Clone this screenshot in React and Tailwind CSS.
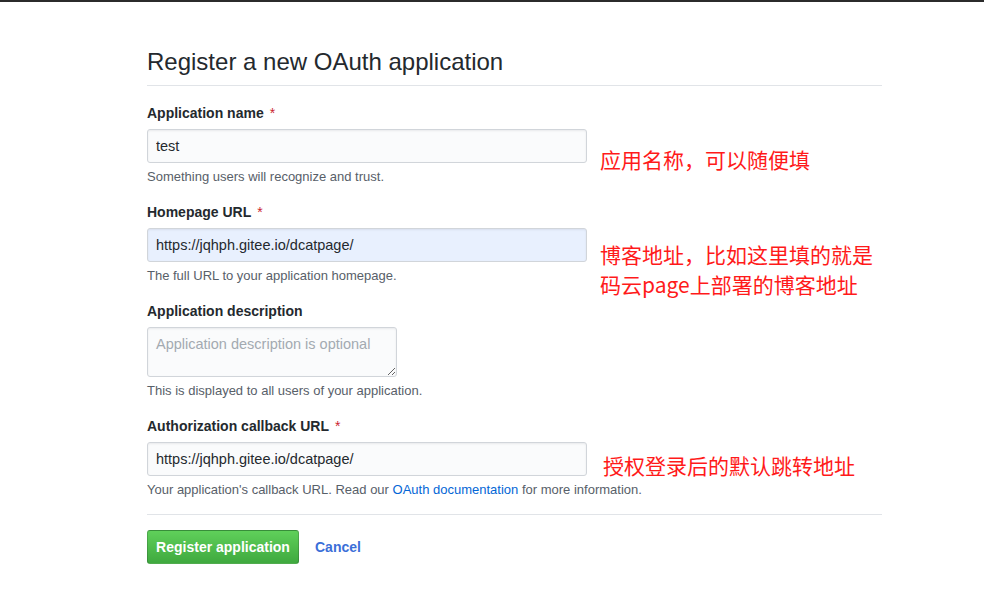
const labelCls = 'block text-[14px] leading-[20px] font-semibold text-[#24292e]'
const inputCls =
  'block w-[440px] h-[34px] px-2 text-[14.5px] text-[#24292e] border border-[#d1d5da] rounded-[3px] shadow-[inset_0_1px_2px_rgba(27,31,35,0.075)] outline-none'
const helpCls = 'mt-[5px] text-[13px] leading-[18px] text-[#586069] whitespace-nowrap'
const noteCls =
  "text-[21px] leading-[30px] text-[#ff1a1a] whitespace-nowrap font-['Noto_Sans_CJK_SC',sans-serif]"

const Star = () => <span className="ml-1.5 font-normal text-[#cb2431]">*</span>

const Field = ({ label, required, children, help, note, noteClass }) => (
  <div className="flex">
    <div className="w-[440px]">
      <label className={labelCls}>
        {label}
        {required && <Star />}
      </label>
      <div className="mt-1.5">{children}</div>
      <p className={helpCls}>{help}</p>
    </div>
    {note && <div className={`h-0 ${noteClass}`}>{note}</div>}
  </div>
)

export default function App() {
  return (
    <div className="min-h-[602px] w-[984px] bg-white font-['Liberation_Sans',Arial,sans-serif]">
      <div className="h-[2px] bg-[#2b2b2b]" />
      <div className="ml-[147px] w-[735px] pt-[45px]">
        <h1 className="pb-2 text-[24px] leading-[30px] font-light text-[#24292e] border-b border-[#e1e4e8]">
          Register a new OAuth application
        </h1>

        <div className="mt-[17px] flex flex-col gap-4">
          <Field
            label="Application name"
            required
            help="Something users will recognize and trust."
            note={<p className={noteCls}>应用名称，可以随便填</p>}
            noteClass="ml-[13px] mt-[41px]"
          >
            <input readOnly value="test" className={`${inputCls} bg-[#fafbfc]`} />
          </Field>

          <Field
            label="Homepage URL"
            required
            help="The full URL to your application homepage."
            note={
              <>
                <p className={noteCls}>博客地址，比如这里填的就是</p>
                <p className={noteCls}>码云page上部署的博客地址</p>
              </>
            }
            noteClass="ml-[13px] mt-[37px]"
          >
            <input
              readOnly
              value="https://jqhph.gitee.io/dcatpage/"
              className={`${inputCls} bg-[#e8f0fe]`}
            />
          </Field>

          <Field label="Application description" help="This is displayed to all users of your application.">
            <textarea
              readOnly
              placeholder="Application description is optional"
              className="block w-[250px] h-[50px] px-2 py-[6px] text-[14.5px] leading-[20px] bg-[#fafbfc] border border-[#d1d5da] rounded-[3px] shadow-[inset_0_1px_2px_rgba(27,31,35,0.075)] outline-none placeholder:text-[#a3aab1]"
            />
          </Field>

          <Field
            label="Authorization callback URL"
            required
            help={
              <>
                Your application's callback URL. Read our{' '}
                <a className="text-[#0366d6]">OAuth documentation</a> for more information.
              </>
            }
            note={<p className={noteCls}>授权登录后的默认跳转地址</p>}
            noteClass="ml-[16px] mt-[34px]"
          >
            <input
              readOnly
              value="https://jqhph.gitee.io/dcatpage/"
              className={`${inputCls} bg-[#fafbfc]`}
            />
          </Field>
        </div>

        <div className="mt-[15px] border-t border-[#e1e4e8] pt-[15px] flex items-center gap-4">
          <button className="h-[34px] w-[152px] rounded-[3px] border border-[rgba(27,31,35,0.2)] bg-gradient-to-b from-[#5fd05a] to-[#3fa93f] text-[14px] font-semibold text-white">
            Register application
          </button>
          <a className="text-[14px] font-semibold text-[#3b6fd8]">Cancel</a>
        </div>
      </div>
    </div>
  )
}
